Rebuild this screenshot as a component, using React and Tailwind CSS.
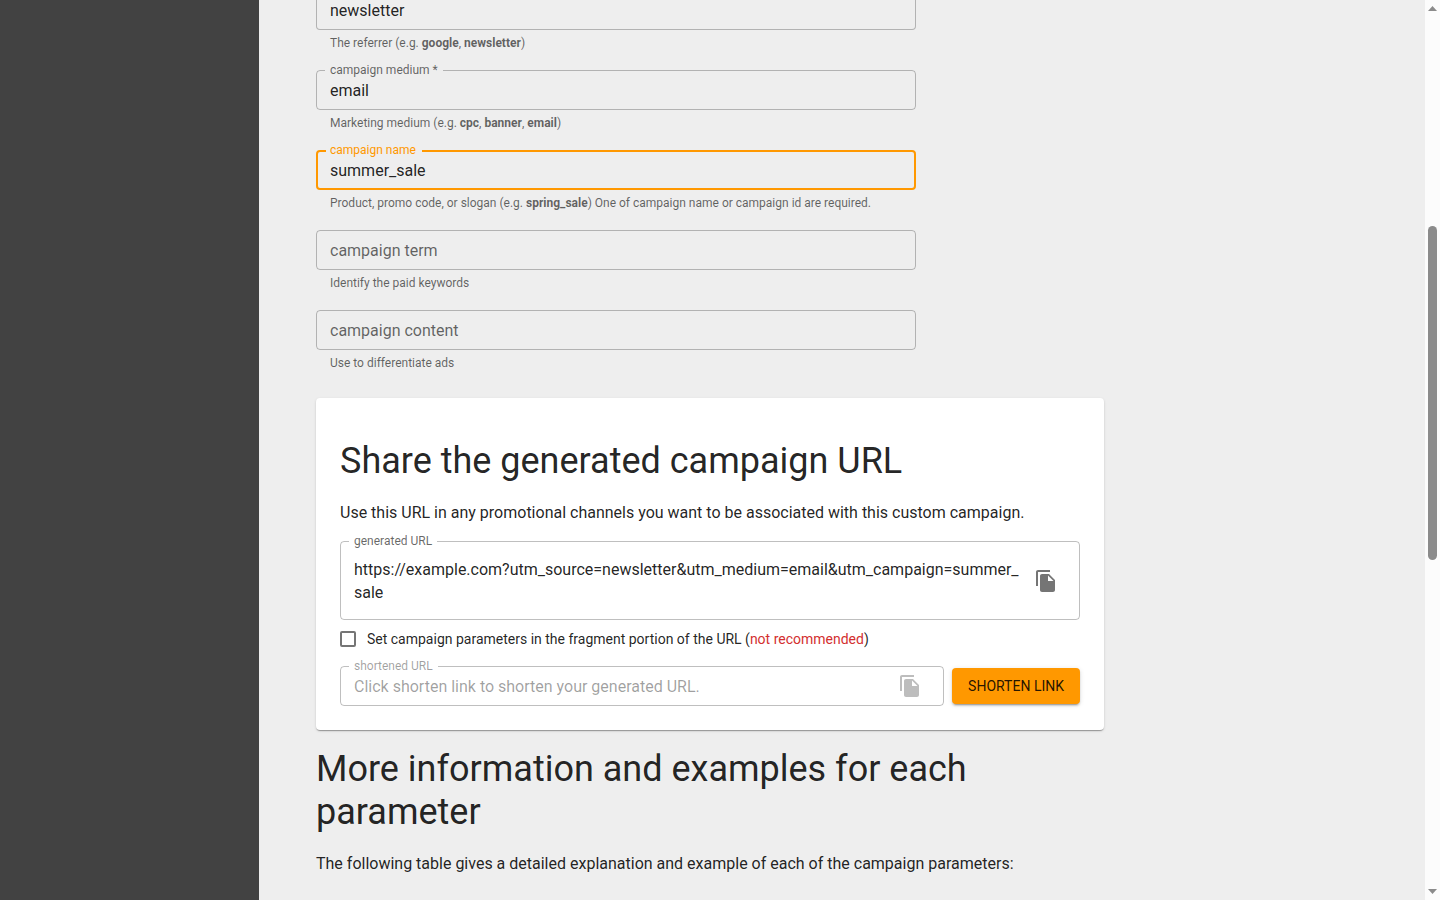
import React, { useState } from "react";
import clsx from "clsx";

const CopyIcon = () => (
  <svg viewBox="0 0 24 24" className="size-6 fill-current" aria-hidden="true">
    <path d="M16 1H4c-1.1 0-2 .9-2 2v14h2V3h12V1zm-1 4 6 6v10c0 1.1-.9 2-2 2H7.99C6.89 23 6 22.1 6 21l.01-14c0-1.1.89-2 1.99-2h7zm-1 7h5.5L14 6.5V12z" />
  </svg>
);

const OutlinedField = ({ id, label, focused, disabled, children }) => (
  <fieldset
    className={clsx(
      "w-full min-w-0 rounded",
      focused ? "border-2 border-[#ff9800] px-3" : "border border-black/25 px-[13px]"
    )}
  >
    <legend className={clsx("text-xs leading-3", focused ? "-ml-1 pr-[6px] pb-[2px] pl-1" : "-ml-[5px] px-[5px]")}>
      <label
        htmlFor={id}
        className={clsx("block", focused ? "text-[#ff9800]" : disabled ? "text-black/38" : "text-black/60")}
      >
        {label}
      </label>
    </legend>
    {children}
  </fieldset>
);

const Helper = ({ id, children }) => (
  <p id={id} className="mt-[3px] px-[14px] text-xs leading-5 text-black/60">
    {children}
  </p>
);

const Scrollbar = () => (
  <div className="sticky top-0 flex h-screen w-[15px] shrink-0 flex-col items-center bg-[#fcfcfc] py-[6px]" aria-hidden="true">
    <svg viewBox="0 0 9 5" className="h-[5px] w-[9px] fill-[#8b8b8b]">
      <path d="M4.5 0 9 5H0z" />
    </svg>
    <div className="grow-[215]" />
    <div className="w-[9px] grow-[334] rounded-full bg-[#8b8b8b]" />
    <div className="grow-[329]" />
    <svg viewBox="0 0 9 5" className="h-[5px] w-[9px] fill-[#8b8b8b]">
      <path d="M0 0h9L4.5 5z" />
    </svg>
  </div>
);

const App = () => {
  const [form, setForm] = useState({
    source: "newsletter",
    medium: "email",
    name: "summer_sale",
    term: "",
    content: "",
  });
  const [fragment, setFragment] = useState(false);

  const onChange = (event) => {
    setForm((prev) => ({ ...prev, [event.target.name]: event.target.value }));
  };

  const params = [
    ["utm_source", form.source],
    ["utm_medium", form.medium],
    ["utm_campaign", form.name],
    ["utm_term", form.term],
    ["utm_content", form.content],
  ]
    .filter(([, value]) => value)
    .map(([key, value]) => `${key}=${encodeURIComponent(value)}`)
    .join("&");
  const generatedUrl = `https://example.com${fragment ? "#" : "?"}${params}`;

  return (
    <div className="flex min-h-screen bg-[#eeeeee] font-[Roboto,sans-serif] text-base text-black/87">
      <aside className="w-[259px] shrink-0 bg-[#424242]" />

      <main className="min-w-0 flex-1 px-[57px] pb-6">
        <form className="flex max-w-[600px] flex-col gap-[11px]">
          <div>
            <div className="rounded-b border border-t-0 border-black/25 px-[13px] pb-2">
              <input name="source" aria-label="campaign source" aria-describedby="source-help" onChange={onChange} value={form.source} className="block h-[21px] w-full outline-none" type="text" required />
            </div>
            <Helper id="source-help">
              The referrer (e.g. <b>google</b>, <b>newsletter</b>)
            </Helper>
          </div>

          <div>
            <OutlinedField id="medium" label="campaign medium *">
              <input id="medium" name="medium" aria-describedby="medium-help" onChange={onChange} value={form.medium} className="mb-[5px] block h-7 w-full outline-none" type="text" required />
            </OutlinedField>
            <Helper id="medium-help">
              Marketing medium (e.g. <b>cpc</b>, <b>banner</b>, <b>email</b>)
            </Helper>
          </div>

          <div>
            <OutlinedField id="name" label="campaign name" focused>
              <input id="name" name="name" aria-describedby="name-help" onChange={onChange} value={form.name} className="mb-[5px] block h-[25px] w-full outline-none" type="text" />
            </OutlinedField>
            <Helper id="name-help">
              Product, promo code, or slogan (e.g. <b>spring_sale</b>) One of campaign name or campaign id are required.
            </Helper>
          </div>

          <div className="pt-[6px]">
            <input name="term" aria-label="campaign term" aria-describedby="term-help" onChange={onChange} value={form.term} placeholder="campaign term" className="block h-10 w-full rounded border border-black/25 px-[13px] placeholder:text-black/60" type="text" />
            <Helper id="term-help">Identify the paid keywords</Helper>
          </div>

          <div className="pt-[6px]">
            <input name="content" aria-label="campaign content" aria-describedby="content-help" onChange={onChange} value={form.content} placeholder="campaign content" className="block h-10 w-full rounded border border-black/25 px-[13px] placeholder:text-black/60" type="text" />
            <Helper id="content-help">Use to differentiate ads</Helper>
          </div>
        </form>

        <section className="mt-[25px] max-w-[788px] rounded bg-white px-6 pt-[42px] pb-6 shadow-[0_2px_1px_-1px_rgba(0,0,0,0.2),0_1px_1px_0_rgba(0,0,0,0.14),0_1px_3px_0_rgba(0,0,0,0.12)]">
          <h2 className="text-4xl leading-[43px]">Share the generated campaign URL</h2>
          <p className="mt-[18px] mb-[10px] leading-6">
            Use this URL in any promotional channels you want to be associated with this custom campaign.
          </p>

          <OutlinedField id="generated" label="generated URL">
            <div className="flex items-center pt-[11px] pb-[15px]">
              <textarea id="generated" value={generatedUrl} readOnly rows={2} className="block h-[46px] min-w-0 flex-1 resize-none overflow-hidden leading-[23px] break-all outline-none" />
              <button type="button" aria-label="Copy generated URL" className="-my-2 grid size-10 place-items-center rounded-full text-black/54">
                <CopyIcon />
              </button>
            </div>
          </OutlinedField>

          <div className="mb-[2px] flex h-[38px] items-center gap-[11px] text-sm">
            <input id="fragment" type="checkbox" checked={fragment} onChange={(event) => setFragment(event.target.checked)} className="size-4 appearance-none rounded-xs border-2 border-black/54 checked:bg-[#ff9800]" />
            <label htmlFor="fragment">
              Set campaign parameters in the fragment portion of the URL (<span className="text-[#d32f2f]">not recommended</span>)
            </label>
          </div>

          <div className="flex items-end gap-2">
            <div className="min-w-0 flex-1">
              <OutlinedField id="shortened" label="shortened URL" disabled>
                <div className="flex h-[33px] items-center pb-[5px]">
                  <input id="shortened" placeholder="Click shorten link to shorten your generated URL." className="block h-7 min-w-0 flex-1 placeholder:text-black/38" type="text" disabled />
                  <button type="button" aria-label="Copy shortened URL" className="grid size-10 place-items-center text-black/26" disabled>
                    <CopyIcon />
                  </button>
                </div>
              </OutlinedField>
            </div>
            <button type="button" className="mb-[2px] h-9 rounded bg-[#ff9800] px-4 text-sm shadow-[0_3px_1px_-2px_rgba(0,0,0,0.2),0_2px_2px_0_rgba(0,0,0,0.14),0_1px_5px_0_rgba(0,0,0,0.12)]">
              SHORTEN LINK
            </button>
          </div>
        </section>

        <section className="mt-[18px] max-w-[788px]">
          <h2 className="text-4xl leading-[43px]">More information and examples for each parameter</h2>
          <p className="mt-[18px] leading-6">
            The following table gives a detailed explanation and example of each of the campaign parameters:
          </p>
        </section>
      </main>

      <Scrollbar />
    </div>
  );
};

export default App;
